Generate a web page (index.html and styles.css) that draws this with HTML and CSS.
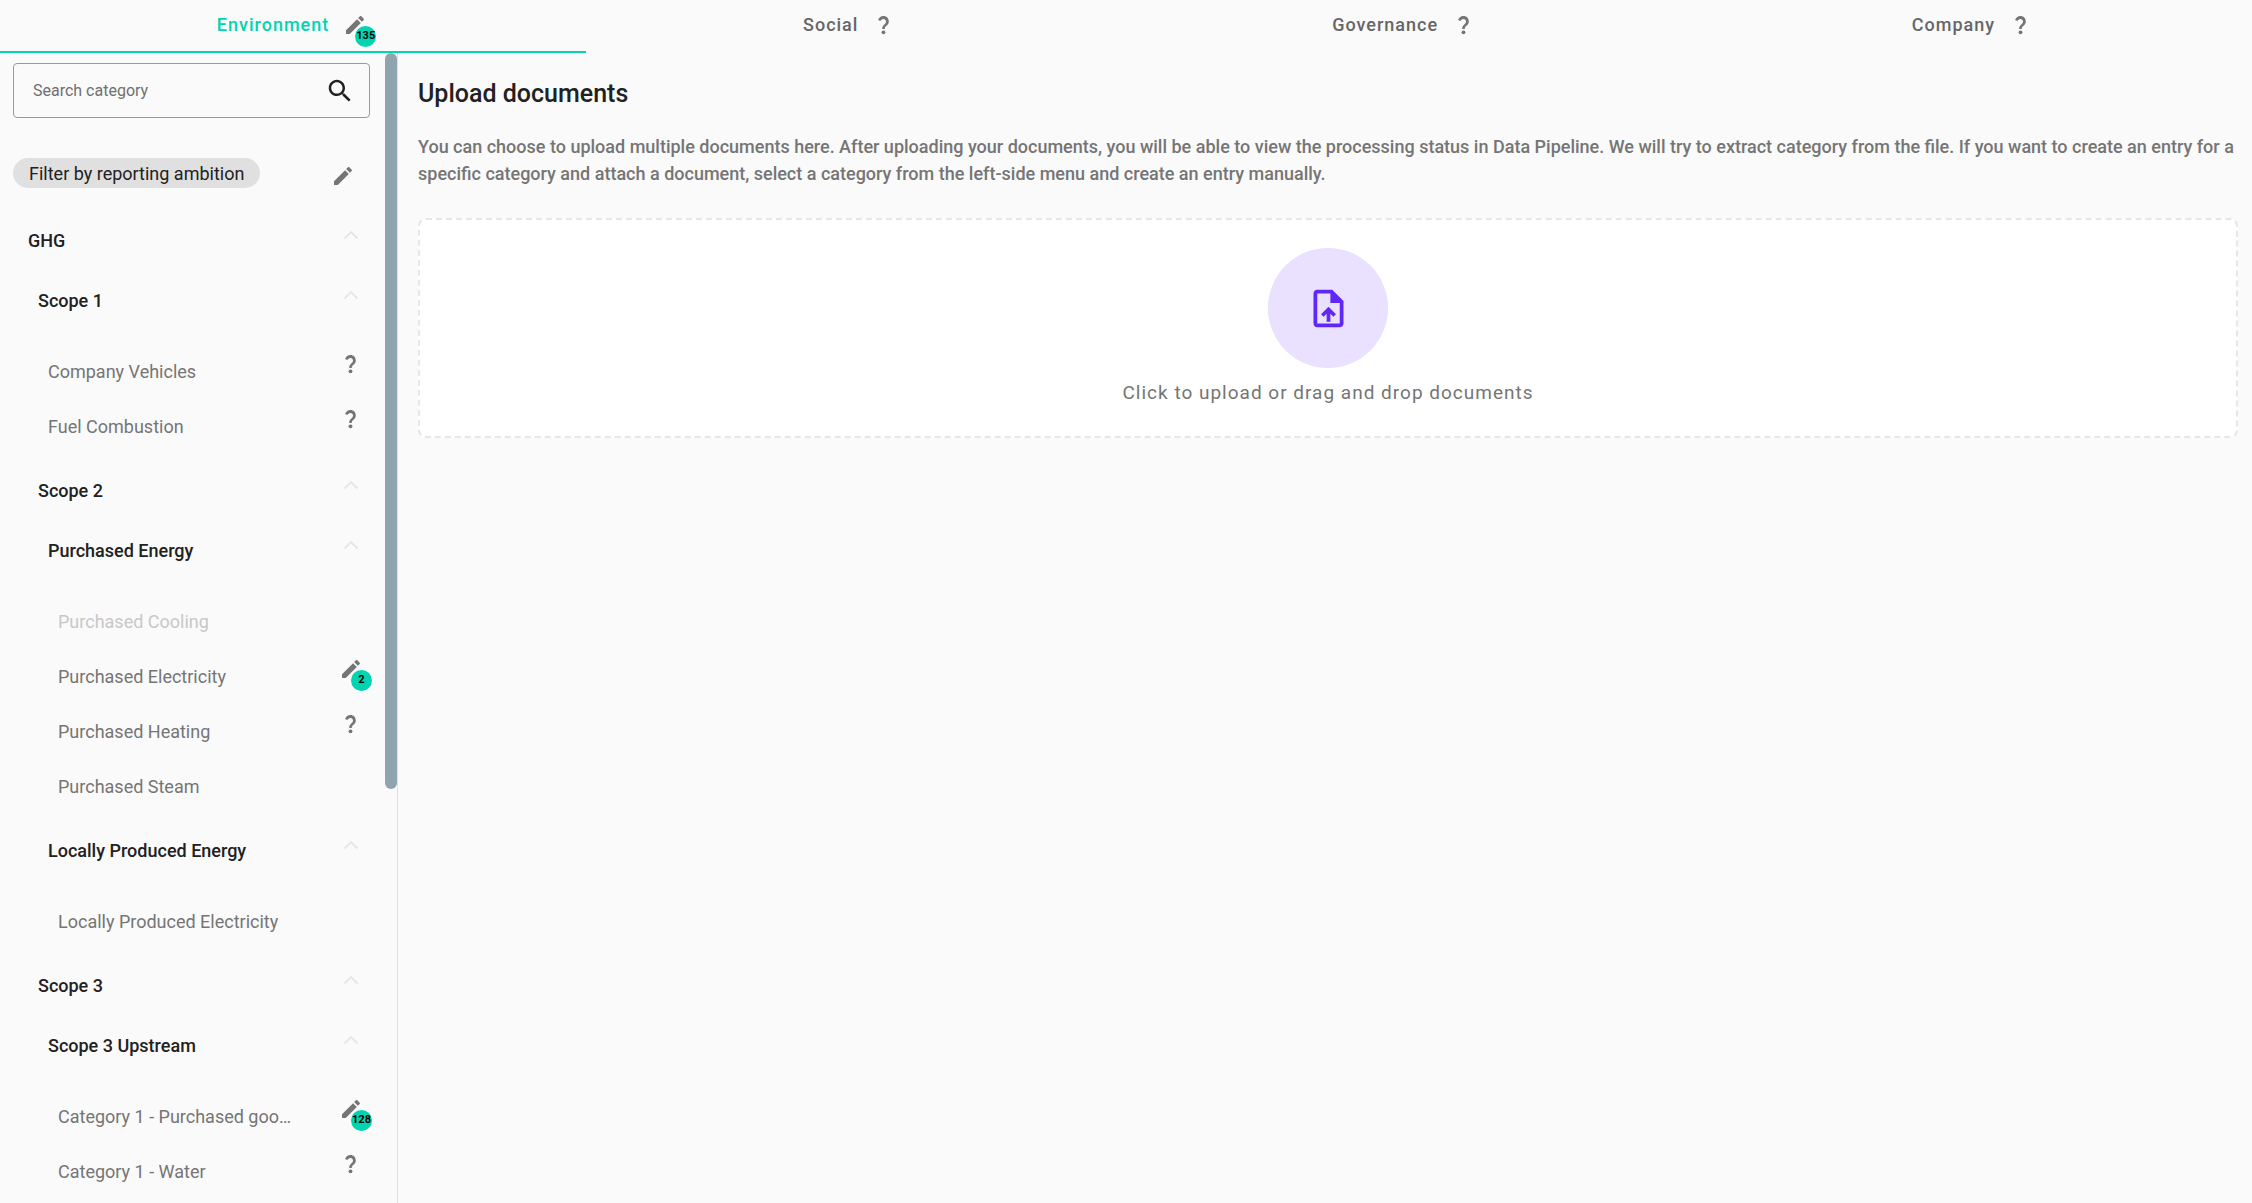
FILE: index.html
```html
<!DOCTYPE html>
<html lang="en">
<head>
<meta charset="utf-8">
<title>Upload documents</title>
<link rel="stylesheet" href="styles.css">
</head>
<body>
<svg class="sprite" aria-hidden="true">
  <symbol id="pencil" viewBox="0 0 24 24"><path d="M3 17.25V21h3.75L17.81 9.94l-3.75-3.75L3 17.25zM20.71 7.04c.39-.39.39-1.02 0-1.41l-2.34-2.34c-.39-.39-1.02-.39-1.41 0l-1.83 1.83 3.75 3.75 1.83-1.83z"/></symbol>
  <symbol id="question" viewBox="0.5 0 24 24"><path d="M10.7 15.9c0-1.9.2-2.7 1.9-4.2 1.2-1.1 1.9-1.8 1.9-3.1 0-1.6-1.1-2.7-2.6-2.7-1.6 0-2.5 1-2.9 2.2L6.6 7.1C7.3 4.8 9.100 3.100 11.900 3.100c3.200 0 5.400 2.200 5.400 5.300 0 2.100-1 3.200-2.300 4.400-1.400 1.300-1.700 1.700-1.700 3.100z"/><circle cx="12" cy="19.300" r="1.900"/></symbol>
  <symbol id="chevron" viewBox="0 0 24 24"><path d="M5.500 15.500 12 9l6.500 6.500" fill="none" stroke="currentColor" stroke-width="1.900"/></symbol>
  <symbol id="search" viewBox="0 0 24 24"><path d="M15.500 14h-.79l-.28-.27C15.410 12.590 16 11.110 16 9.500 16 5.910 13.090 3 9.500 3S3 5.910 3 9.500 5.910 16 9.500 16c1.610 0 3.090-.59 4.230-1.570l.27.28v.79l5 4.990L20.490 19l-4.990-5zm-6 0C7.010 14 5 11.990 5 9.500S7.010 5 9.500 5 14 7.010 14 9.500 11.990 14 9.500 14z"/></symbol>
  <symbol id="upload" viewBox="0 0 24 24"><path d="M14 2H6c-1.100 0-1.990.9-1.990 2L4 20c0 1.100.89 2 1.990 2H18c1.100 0 2-.9 2-2V8l-6-6zm4 18H6V4h7v5h5v11zM8 15.010l1.410 1.410L11 14.840V19h2v-4.160l1.590 1.590L16 15.010 12.010 11 8 15.010z"/></symbol>
</svg>

<nav class="tabs" role="tablist" aria-label="Sections">
  <button class="tab tab-active" role="tab" aria-selected="true"><span>Environment</span><span class="status"><svg class="icon"><use href="#pencil"/></svg><span class="badge">135</span></span></button>
  <button class="tab" role="tab" aria-selected="false"><span>Social</span><span class="status"><svg class="icon"><use href="#question"/></svg></span></button>
  <button class="tab" role="tab" aria-selected="false"><span>Governance</span><span class="status"><svg class="icon"><use href="#question"/></svg></span></button>
  <button class="tab" role="tab" aria-selected="false"><span>Company</span><span class="status"><svg class="icon"><use href="#question"/></svg></span></button>
</nav>

<div class="layout">
  <aside class="sidebar">
    <div class="sidebar-content">
      <div class="search">
        <input class="search-input" type="text" placeholder="Search category" aria-label="Search category">
        <button class="icon-button" aria-label="Search"><svg class="icon icon-search"><use href="#search"/></svg></button>
      </div>
      <div class="filter">
        <button class="chip">Filter by reporting ambition</button>
        <button class="icon-button" aria-label="Edit filter"><svg class="icon"><use href="#pencil"/></svg></button>
      </div>
      <div class="tree">
        <button class="group level-1">GHG<svg class="icon chevron"><use href="#chevron"/></svg></button>
        <button class="group level-2">Scope 1<svg class="icon chevron"><use href="#chevron"/></svg></button>
        <div class="items">
          <a class="item level-3" href="#"><span class="label">Company Vehicles</span><span class="status"><svg class="icon"><use href="#question"/></svg></span></a>
          <a class="item level-3" href="#"><span class="label">Fuel Combustion</span><span class="status"><svg class="icon"><use href="#question"/></svg></span></a>
        </div>
        <button class="group level-2">Scope 2<svg class="icon chevron"><use href="#chevron"/></svg></button>
        <button class="group level-3">Purchased Energy<svg class="icon chevron"><use href="#chevron"/></svg></button>
        <div class="items">
          <a class="item level-4 item-disabled" href="#" aria-disabled="true"><span class="label">Purchased Cooling</span></a>
          <a class="item level-4" href="#"><span class="label">Purchased Electricity</span><span class="status"><svg class="icon"><use href="#pencil"/></svg><span class="badge">2</span></span></a>
          <a class="item level-4" href="#"><span class="label">Purchased Heating</span><span class="status"><svg class="icon"><use href="#question"/></svg></span></a>
          <a class="item level-4" href="#"><span class="label">Purchased Steam</span></a>
        </div>
        <button class="group level-3">Locally Produced Energy<svg class="icon chevron"><use href="#chevron"/></svg></button>
        <div class="items">
          <a class="item level-4" href="#"><span class="label">Locally Produced Electricity</span></a>
        </div>
        <button class="group level-2">Scope 3<svg class="icon chevron"><use href="#chevron"/></svg></button>
        <button class="group level-3">Scope 3 Upstream<svg class="icon chevron"><use href="#chevron"/></svg></button>
        <div class="items">
          <a class="item level-4" href="#"><span class="label">Category 1 - Purchased goo…</span><span class="status"><svg class="icon"><use href="#pencil"/></svg><span class="badge">128</span></span></a>
          <a class="item level-4" href="#"><span class="label">Category 1 - Water</span><span class="status"><svg class="icon"><use href="#question"/></svg></span></a>
        </div>
      </div>
    </div>
    <div class="scroll-track"><div class="scroll-thumb"></div></div>
  </aside>

  <main class="main">
    <h1 class="title">Upload documents</h1>
    <p class="intro">You can choose to upload multiple documents here. After uploading your documents, you will be able to view the processing status in Data Pipeline. We will try to extract category from the file. If you want to create an entry for a specific category and attach a document, select a category from the left-side menu and create an entry manually.</p>
    <button class="dropzone">
      <span class="dropzone-circle"><svg class="icon icon-upload"><use href="#upload"/></svg></span>
      <span class="dropzone-text">Click to upload or drag and drop documents</span>
    </button>
  </main>
</div>
</body>
</html>
```
FILE: styles.css
```css
* {
  box-sizing: border-box;
}

body {
  margin: 0;
  height: 100vh;
  display: flex;
  flex-direction: column;
  overflow: hidden;
  background: #fafafa;
  color: #212121;
  font-family: Roboto, sans-serif;
  font-size: 18px;
}

button {
  margin: 0;
  padding: 0;
  border: 0;
  background: none;
  color: inherit;
  font: inherit;
  cursor: pointer;
}

.sprite {
  position: absolute;
  width: 0;
  height: 0;
}

.icon {
  display: block;
  flex: none;
  width: 24px;
  height: 24px;
  color: #757575;
  fill: currentColor;
}

/* Tabs */
.tabs {
  display: flex;
  flex: none;
  height: 53px;
}

.tab {
  display: flex;
  flex: 1 1 auto;
  align-items: center;
  justify-content: center;
  gap: 14px;
  padding: 0 2px 2px 0;
  border-bottom: 2px solid transparent;
  color: #666;
  font-weight: 500;
  letter-spacing: 1px;
}

.tab-active {
  border-color: #00d4b1;
  color: #00d4b1;
}

.status {
  position: relative;
  flex: none;
  letter-spacing: 0;
}

.badge {
  position: absolute;
  top: 13px;
  left: 12px;
  width: 21px;
  height: 21px;
  border-radius: 50%;
  background: #00d4b1;
  color: #000;
  font-size: 11px;
  font-weight: 700;
  line-height: 19px;
  text-align: center;
}

/* Layout */
.layout {
  display: flex;
  flex: 1;
  min-height: 0;
}

.sidebar {
  display: flex;
  flex: none;
  width: 398px;
  border-right: 1px solid #e0e0e0;
}

.sidebar-content {
  flex: 1;
  min-width: 0;
  padding: 10px 15px 0 13px;
  overflow: hidden;
}

.scroll-track {
  width: 12px;
}

.scroll-thumb {
  height: 64%;
  border-radius: 6px;
  background: #90a4ae;
}

.search {
  display: flex;
  align-items: center;
  height: 55px;
  padding: 0 14px 0 19px;
  border: 1px solid #999;
  border-radius: 4px;
}

.search-input {
  flex: 1;
  min-width: 0;
  padding: 0;
  border: 0;
  outline: 0;
  background: none;
  color: #212121;
  font: 400 16px Roboto, sans-serif;
}

.search-input::placeholder {
  color: #707070;
  opacity: 1;
}

.icon-search {
  width: 30px;
  height: 30px;
  color: #212121;
}

.filter {
  display: flex;
  align-items: flex-end;
  justify-content: space-between;
  margin: 40px 0 22px;
  padding-right: 15px;
}

.chip {
  height: 30px;
  padding: 0 16px;
  border-radius: 15px;
  background: #e0e0e0;
}

/* Category tree */
.group,
.item {
  display: flex;
  align-items: center;
  justify-content: space-between;
  width: 100%;
  padding-right: 7px;
}

.group {
  height: 60px;
  font-weight: 500;
}

.chevron {
  margin-bottom: 10px;
  color: #e6e6ea;
}

.items {
  padding: 14px 0 6px;
}

.item {
  height: 55px;
  color: #757575;
  text-decoration: none;
}

.item .status {
  margin-bottom: 16px;
}

.item-disabled {
  color: #c8c8c8;
}

.label {
  max-width: 240px;
  overflow: hidden;
  text-overflow: ellipsis;
  white-space: nowrap;
}

.level-1 {
  padding-left: 15px;
}

.level-2 {
  padding-left: 25px;
}

.level-3 {
  padding-left: 35px;
}

.level-4 {
  padding-left: 45px;
}

/* Main panel */
.main {
  flex: 1;
  min-width: 0;
  padding: 25px 14px 0 20px;
}

.title {
  margin: 0 0 23px;
  font-size: 25px;
  font-weight: 500;
  line-height: 32px;
}

.intro {
  margin: 0 0 31px;
  color: #757575;
  font-weight: 500;
  line-height: 27px;
}

.dropzone {
  display: flex;
  flex-direction: column;
  align-items: center;
  gap: 10px;
  width: 100%;
  padding: 28px 0;
  border: 2px dashed #e6e6ea;
  border-radius: 8px;
  background: #fff;
  color: #757575;
  font-size: 19px;
  line-height: 30px;
  letter-spacing: 1px;
}

.dropzone-circle {
  display: flex;
  align-items: center;
  justify-content: center;
  width: 120px;
  height: 120px;
  border-radius: 50%;
  background: #eae0ff;
}

.icon-upload {
  width: 45px;
  height: 45px;
  color: #6127f5;
}
```
